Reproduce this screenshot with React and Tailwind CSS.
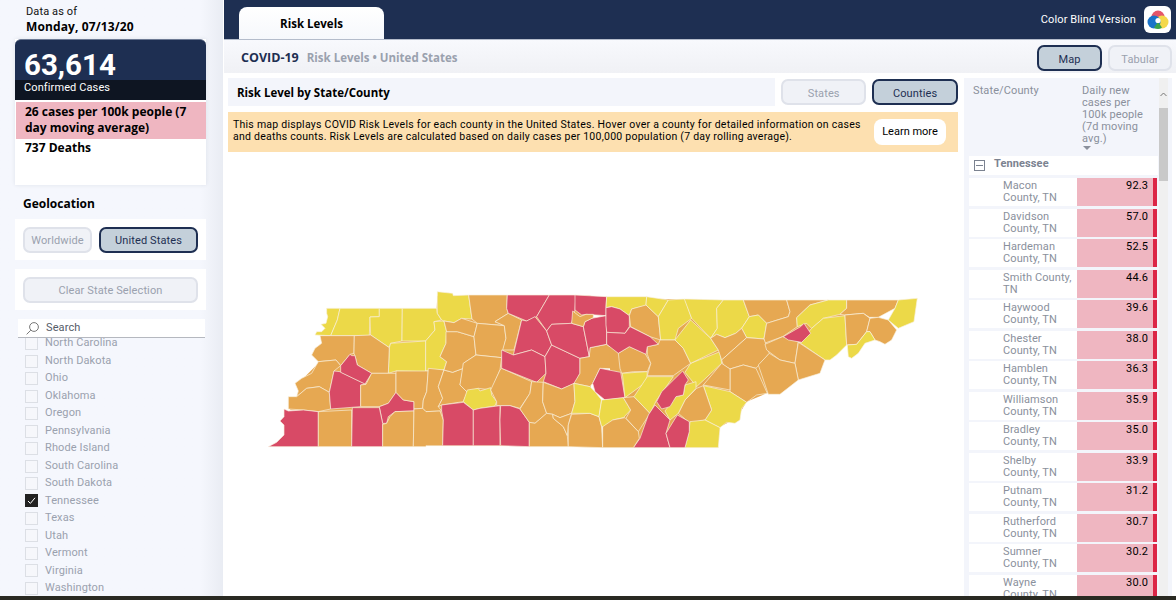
import React from "react";

const roboto = "font-['Roboto',sans-serif]";
const din = roboto + " tracking-[0.01em]";
const bold = "font-['Open_Sans',sans-serif] font-bold";

const R = "#d84a66";
const O = "#e6a852";
const Y = "#ecd948";

// counties, west half (coords are 3x, offset 260,285)
const west = [
    [Y, "200,70 240,70 232,105 212,152 165,150 170,140 185,140 195,130 183,118 198,115 203,95 200,85"],
    [Y, "240,70 358,70 358,95 330,96 328,152 212,152 232,105"],
    [Y, "358,70 427,70 426,168 392,175 388,188 332,150 330,96 358,95"],
    [Y, "427,70 530,70 532,85 545,105 522,110 525,135 497,168 426,168"],
    [Y, "392,175 497,168 497,260 408,258 385,265 388,188"],
    [Y, "522,110 552,108 560,140 558,175 540,215 560,230 552,255 497,258 497,168 525,135"],
    [Y, "532,20 578,25 580,32 626,30 636,102 605,100 582,113 552,108 545,105 532,85"],
    [O, "180,152 212,152 283,152 282,205 270,208 242,242 228,225 175,230 155,210 165,190 185,175"],
    [O, "283,152 332,150 388,188 385,265 335,265 292,240 285,212 282,205"],
    [O, "175,230 228,225 242,242 222,258 208,322 178,305 140,310 110,335 115,318 105,295 125,280 155,265"],
    [O, "110,335 140,310 178,305 208,322 212,372 175,380 130,375 85,372 85,335"],
    [R, "222,258 240,260 318,298 302,300 302,365 212,372 208,322"],
    [R, "275,212 285,212 292,240 335,265 315,297 242,262 242,242 270,208"],
    [O, "335,265 408,265 408,322 385,355 358,365 302,365 302,300 318,298"],
    [R, "408,322 430,345 462,350 462,378 405,380 385,395 380,415 368,415 358,365 385,355"],
    [O, "408,258 505,258 500,320 490,345 488,370 462,372 462,350 430,345 408,322"],
    [O, "505,250 552,255 535,305 548,340 535,365 545,378 498,380 488,370 490,345 500,320"],
    [O, "552,255 578,262 610,250 600,300 622,322 610,350 545,360 535,365 548,340 535,305"],
    [O, "558,140 592,140 642,155 648,210 610,235 610,250 578,262 552,255 560,230 540,215 558,175"],
    [O, "552,108 582,113 605,100 652,115 642,155 592,140 560,140"],
    [O, "626,30 742,30 740,70 745,85 705,110 735,122 652,115 636,102"],
    [O, "652,115 733,122 738,160 725,218 648,210 642,155"],
    [O, "648,210 725,218 720,255 695,315 655,310 622,322 600,300 610,235"],
    [Y, "622,315 655,310 660,318 692,308 695,330 710,350 705,363 660,370 640,375 610,350"],
    [O, "725,250 815,290 810,325 780,370 750,362 710,362 710,350 692,315 720,255"],
    [O, "705,110 745,85 785,105 762,195 728,195 738,160 733,122"],
    [R, "742,30 868,30 830,95 800,108 745,85 740,70"],
    [R, "868,30 948,30 945,75 935,115 875,118 860,138 830,95"],
    [R, "800,108 825,95 860,138 875,180 855,215 815,195 760,210 785,105"],
    [R, "725,195 760,210 815,195 855,215 858,265 830,292 725,250"],
    [R, "875,180 960,220 960,265 945,295 905,312 850,290 858,265 855,215"],
    [R, "860,138 875,118 935,115 970,125 988,215 960,220 875,180"],
    [R, "72,372 85,378 130,375 175,380 175,485 25,485 50,472 72,450 72,420 60,408 72,395"],
    [O, "175,380 275,375 275,485 175,485"],
    [R, "277,368 358,368 368,415 368,485 275,485"],
    [O, "368,418 380,415 390,395 405,380 462,378 460,485 368,485"],
    [O, "462,372 488,370 498,380 540,378 550,405 548,482 498,482 498,485 460,485"],
    [R, "545,360 610,352 640,375 640,482 548,482 550,405 545,378"],
    [R, "640,375 660,370 720,362 720,482 640,482"],
    [R, "722,362 750,362 780,372 808,412 808,485 722,482 720,405"],
    [O, "815,290 850,292 848,350 860,385 825,415 808,412 780,372 810,325"],
    [O, "850,292 905,312 942,295 945,350 935,385 900,398 878,388 860,385 848,350"],
    [O, "808,412 825,415 860,385 878,388 880,400 910,425 922,452 925,485 808,485"],
    [O, "878,388 900,398 935,385 925,420 922,452 910,425 880,400"],
    [O, "925,420 935,388 990,385 1017,395 1025,425 1028,488 925,485"],
    [O, "960,220 988,215 990,188 1040,178 1075,205 1080,252 1020,250 998,295 990,305 942,295 960,265"],
    [Y, "942,295 990,305 1005,320 1025,345 1017,395 990,385 935,385 945,350"],
];

// counties, east half (offset 590,285)
const east = [
    [R, "-45,30 50,35 48,68 48,92 -12,88 -25,90 -45,75"],
    [R, "-15,110 5,100 48,92 50,142 50,178 0,188 -2,215 -20,125"],
    [O, "-52,78 -30,95 -12,88 10,88 10,98 -15,110 -20,125 -55,115"],
    [Y, "50,35 170,35 168,62 125,72 118,92 90,72 65,65 48,68"],
    [R, "48,68 65,65 90,72 118,92 118,125 105,145 50,142 48,120"],
    [O, "125,72 168,60 205,95 212,165 180,155 122,125 118,92"],
    [Y, "170,35 235,45 205,95 168,60"],
    [Y, "235,45 285,42 305,100 265,130 255,165 212,165 205,95"],
    [Y, "283,42 400,45 380,70 382,130 362,160 305,100"],
    [Y, "400,45 460,45 478,95 455,130 437,145 405,158 380,148 362,160 382,130 380,70"],
    [O, "460,45 590,45 600,80 595,95 530,115 505,90 478,95"],
    [Y, "478,95 505,90 530,115 522,162 500,160 470,158 455,130"],
    [O, "590,45 715,45 660,60 620,98 622,125 578,155 523,175 522,162 530,115 595,95 600,80"],
    [Y, "715,45 770,45 770,70 750,88 700,100 665,130 650,115 622,125 620,98 660,60"],
    [Y, "650,148 665,130 700,100 765,92 770,180 740,210 720,225 705,225 625,170 635,172"],
    [O, "770,45 925,45 915,70 865,97 838,97 820,85 765,90 750,88 770,70"],
    [O, "765,90 820,85 840,100 830,140 800,178 770,180"],
    [O, "840,100 865,97 895,105 920,135 905,165 885,178 870,170 855,165 840,140 830,140"],
    [Y, "830,140 840,140 855,165 825,175 805,205 785,220 775,215 772,180 800,178"],
    [Y, "925,45 982,40 972,110 925,130 895,105 915,70"],
    [O, "172,272 182,235 172,208 172,185 205,178 210,165 255,165 280,190 302,235 250,272"],
    [O, "85,205 118,185 165,205 182,235 172,260 130,260 95,265 90,250"],
    [R, "30,250 92,262 105,338 45,345 15,320 8,295"],
    [Y, "97,265 172,260 170,290 105,338"],
    [R, "50,142 105,145 120,125 180,155 205,178 172,185 168,208 118,185 85,205 50,178"],
    [Y, "35,345 100,338 122,375 100,398 68,405 55,425 35,425 27,395"],
    [O, "100,338 132,335 180,385 145,440 108,400 122,375"],
    [Y, "172,275 250,275 200,345 180,385 132,335"],
    [Y, "302,235 390,200 395,235 320,305 285,262"],
    [Y, "255,165 302,105 362,160 385,195 302,235 280,190"],
    [O, "362,160 380,148 405,158 437,145 455,130 470,158 395,225 385,195"],
    [O, "470,158 522,162 538,205 498,250 460,240 420,252 400,240 395,225"],
    [O, "525,178 578,155 625,170 615,235 570,225 530,195"],
    [O, "625,172 705,225 690,265 625,285 615,235"],
    [O, "538,205 570,225 615,235 625,285 570,328 535,328 505,240"],
    [O, "420,252 460,240 498,250 532,325 500,330 470,352 420,320"],
    [O, "395,235 420,252 420,315 340,300"],
    [Y, "340,302 420,320 470,352 455,370 450,405 435,415 410,412 390,428 345,405 365,375"],
    [O, "320,310 340,302 365,375 345,405 300,415 265,385 285,345"],
    [Y, "300,410 345,405 390,428 385,488 285,488 297,440"],
    [Y, "318,290 318,310 285,345 265,385 240,405 225,378 258,335 280,330 285,300"],
    [R, "278,258 295,285 285,300 280,330 258,335 240,365 215,372 200,350 215,320"],
    [R, "195,360 240,405 228,445 240,488 130,488 150,460 175,390"],
    [R, "262,390 298,410 298,440 285,488 240,488 228,445"],
    [O, "38,425 68,405 105,398 145,440 148,460 130,488 38,488"],
    [R, "580,155 632,125 642,115 662,145 635,172 595,165"],
];

const states = [
    "North Carolina", "North Dakota", "Ohio", "Oklahoma", "Oregon", "Pennsylvania", "Rhode Island",
    "South Carolina", "South Dakota", "Tennessee", "Texas", "Utah", "Vermont", "Virginia", "Washington",
];

const rows = [
    ["Macon County, TN", "92.3"], ["Davidson County, TN", "57.0"], ["Hardeman County, TN", "52.5"],
    ["Smith County, TN", "44.6"], ["Haywood County, TN", "39.6"], ["Chester County, TN", "38.0"],
    ["Hamblen County, TN", "36.3"], ["Williamson County, TN", "35.9"], ["Bradley County, TN", "35.0"],
    ["Shelby County, TN", "33.9"], ["Putnam County, TN", "31.2"], ["Rutherford County, TN", "30.7"],
    ["Sumner County, TN", "30.2"], ["Wayne County, TN", "30.0"],
];

function ToggleButton({ active, low, className, children }) {
    return (
        <div
            className={
                (active
                    ? "bg-[#c4d0da] border-[#1e2f52] text-[#1e2f52]"
                    : "bg-[#f0f2f7] border-[#dfe2ea] text-[#9aa1ae]") +
                (low ? " pt-[5px]" : " pt-[3px]") +
                " flex items-center justify-center rounded-[7px] border-2 text-[11px] " + din + " " + className
            }
        >
            {children}
        </div>
    );
}

function SideBar() {
    return (
        <div className="w-[223px] shrink-0 bg-[#f3f5fb] bg-gradient-to-r from-[#f5f7fd] from-90% to-[#e9ecf3] flex flex-col">
            <div className={"pl-[26px] pt-[4px] text-[11px] leading-[15px] text-[#111] h-[39px] " + din}>
                Data as of
                <div className={"text-[12px] leading-[15px] text-black " + bold}>Monday, 07/13/20</div>
            </div>
            <div className="ml-[15px] mr-[17px] h-[146px] bg-white shadow-[0_0_4px_rgba(30,47,82,0.1)]">
                <div className="h-[61px] rounded-t-[6px] bg-[#1e2f52] border-t border-[#6d7a94] flex flex-col">
                    <div className={"h-[40px] pl-[9px] text-white text-[29.5px] leading-[50px] font-bold " + roboto}>63,614</div>
                    <div className={"h-[20px] pl-[9px] bg-[#0e1522] text-white text-[11px] leading-[15px] " + din}>Confirmed Cases</div>
                </div>
                <div className={"mt-[2px] ml-px h-[37px] pl-[9px] pr-[14px] pt-[2px] bg-[#efb6c1] text-[12px] leading-[16px] text-black " + bold}>
                    26 cases per 100k people (7 day moving average)
                </div>
                <div className={"pl-[10px] pt-[1px] text-[12px] leading-[16px] text-black " + bold}>737 Deaths</div>
            </div>
            <div className={"pl-[23px] mt-[11px] text-[12px] leading-[16px] text-black " + bold}>Geolocation</div>
            <div className="ml-[15px] mr-[17px] mt-[7px] h-[41px] bg-white flex items-center gap-[7px] px-[8px]">
                <ToggleButton className="w-[69px] h-[26px]">Worldwide</ToggleButton>
                <ToggleButton active className="w-[99px] h-[26px]">United States</ToggleButton>
            </div>
            <div className="ml-[15px] mr-[17px] mt-[9px] h-[41px] bg-white flex items-center px-[8px]">
                <ToggleButton className="w-[175px] h-[26px]">Clear State Selection</ToggleButton>
            </div>
            <div className={"ml-[18px] mr-[18px] mt-[9px] h-[19px] bg-white border-b border-[#b5b8bf] flex items-center pl-[8px] gap-[7px] text-[11px] text-[#555c68] " + din}>
                <svg width="13" height="13" viewBox="0 0 13 13" fill="none" stroke="#555" strokeWidth="0.8">
                    <circle cx="8" cy="5" r="4.4" />
                    <path d="M4.8 8.2 0.6 12.4" />
                </svg>
                Search
            </div>
            <div className="flex-1 overflow-hidden pl-[25px]">
                <div className="-mt-[3px]">
                    {states.map((s) => (
                        <div key={s} className={"h-[17.47px] flex items-center gap-[7px] text-[11px] text-[#9aa1ae] " + din}>
                            {s === "Tennessee" ? (
                                <span className="w-[13px] h-[13px] bg-[#222] flex items-center justify-center">
                                    <svg width="9" height="9" viewBox="0 0 9 9" fill="none" stroke="#fff" strokeWidth="1">
                                        <path d="M1 5 3.4 7.4 8 1.8" />
                                    </svg>
                                </span>
                            ) : (
                                <span className="w-[13px] h-[13px] border border-[#dcdfe5] bg-[#f6f7fb]" />
                            )}
                            {s}
                        </div>
                    ))}
                </div>
            </div>
        </div>
    );
}

function TopBar() {
    return (
        <div className="h-[40px] shrink-0 bg-[#1e2f52] border-b border-[#b4bccb] flex items-end pl-[15px] pr-[5px]">
            <div className={"w-[145px] h-[32px] rounded-t-[8px] bg-gradient-to-b from-white to-[#f6f8fc] flex items-center justify-center text-[11.5px] text-black pt-[1px] " + bold}>
                Risk Levels
            </div>
            <div className={"ml-auto self-center flex items-center gap-[8px] text-[11px] text-white " + din}>
                <span className="pt-[1px]">Color Blind Version</span>
                <span className="w-[27px] h-[27px] rounded-[6px] bg-white flex items-center justify-center">
                    <svg width="22" height="22" viewBox="0 0 22 22">
                        <circle cx="11" cy="8" r="6.5" fill="#e5566a" />
                        <circle cx="15" cy="13" r="6.5" fill="#f4d84a" />
                        <circle cx="7" cy="13" r="6.5" fill="#1a73c9" />
                        <path d="M7 18.5A6 6 0 0 0 15 18.5L11 13Z" fill="#3ba24a" />
                        <circle cx="11" cy="11.5" r="2.6" fill="#fff" />
                    </svg>
                </span>
            </div>
        </div>
    );
}

function CountyMap() {
    return (
        <svg className="block" width="730" height="444" viewBox="228 152 730 444">
            <g transform="translate(260 285) scale(0.3333)" strokeLinejoin="round">
                <polygon fill={O} points="240,72 530,72 532,32 626,32 992,32 992,483 175,483 175,378 90,375 110,335 125,285 175,235 185,175 215,152" />
                {west.map(([c, p], i) => <polygon key={i} fill={c} stroke="#f9f1df" strokeWidth="2" points={p} />)}
            </g>
            <g transform="translate(590 285) scale(0.3333)" strokeLinejoin="round">
                <polygon fill={O} points="60,38 460,47 760,47 770,90 770,170 700,220 620,285 530,325 470,350 440,400 390,425 383,486 60,486" />
                {east.map(([c, p], i) => <polygon key={i} fill={c} stroke="#f9f1df" strokeWidth="2" points={p} />)}
            </g>
        </svg>
    );
}

function CountyTable() {
    return (
        <div className="w-[208px] ml-[6px] bg-[#f3f5fb] flex h-full overflow-hidden pl-[5px]">
            <div className="w-[189px] shrink-0">
                <div className={"h-[78px] flex text-[11px] leading-[12px] text-[#8a909c] " + din}>
                    <div className="w-[108px] pl-[4px] pt-[7px]">State/County</div>
                    <div className="flex-1 pl-[5px] pr-[12px] pt-[7px]">
                        Daily new cases per 100k people (7d moving avg.)
                        <svg className="ml-[1px] mt-[1px]" width="8" height="4" viewBox="0 0 8 4"><path d="M0 0H8L4 4Z" fill="#8a909c" /></svg>
                    </div>
                </div>
                <div className={"h-[19px] bg-white flex items-center pl-[5px] gap-[9px] text-[11px] text-[#7b8290] font-bold " + din}>
                    <span className="w-[11px] h-[11px] border border-[#7b8290] flex items-center justify-center">
                        <span className="w-[7px] h-px bg-[#7b8290]" />
                    </span>
                    <span className="-mt-[2px]">Tennessee</span>
                </div>
                <div className="h-[3px]" />
                {rows.map(([name, v]) => (
                    <div key={name} className="h-[30.5px] flex pb-[2.5px]">
                        <div className={"w-[108px] bg-white pl-[34px] pr-[2px] text-[11px] leading-[12px] pt-[2px] text-[#8a909c] " + din}>{name}</div>
                        <div className={"w-[76px] bg-[#efb6c1] text-right pr-[5px] pt-[2px] text-[11px] leading-[12px] text-black " + din}>{v}</div>
                        <div className="w-[4px] bg-[#dc2647]" />
                    </div>
                ))}
            </div>
            <div className="w-[9px] ml-[1px] shrink-0 bg-[#f0f0f0] flex flex-col">
                <div className="h-[30px] flex items-center justify-center pt-[2px]">
                    <svg width="7" height="5" viewBox="0 0 7 5" fill="none" stroke="#777" strokeWidth="1"><path d="M0.5 4 3.5 1 6.5 4" /></svg>
                </div>
                <div className="h-[73px] bg-[#c9c9c9]" />
            </div>
        </div>
    );
}

export default function App() {
    return (
        <div className="w-[1176px] h-[600px] overflow-hidden bg-white flex flex-col">
            <div className="h-[596px] flex overflow-hidden">
                <SideBar />
                <div className="flex-1 ml-px flex flex-col min-w-0">
                    <TopBar />
                    <div className="h-[33px] shrink-0 bg-gradient-to-b from-[#f8f9fd] to-[#f0f1f5] flex items-center pt-[3px] pl-[17px] pr-[4px]">
                        <span className={"text-[12.5px] text-[#1e2f52] " + bold}>COVID-19</span>
                        <span className={"ml-[8px] text-[11.5px] text-[#9aa1ae] " + bold}>Risk Levels • United States</span>
                        <ToggleButton active low className="ml-auto w-[65px] h-[26px]">Map</ToggleButton>
                        <ToggleButton low className="ml-[6px] w-[64px] h-[26px]">Tabular</ToggleButton>
                    </div>
                    <div className="flex-1 flex pt-[5px] pl-[4px] min-h-0">
                        <div className="w-[730px] shrink-0 flex flex-col">
                            <div className="h-[28px] flex gap-[6px]">
                                <div className={"w-[548px] bg-[#f3f5fb] flex items-center pl-[9px] pt-[1px] text-[11.5px] text-black " + bold}>Risk Level by State/County</div>
                                <ToggleButton low className="w-[85px] h-[26px] mt-[1px]">States</ToggleButton>
                                <ToggleButton active low className="w-[86px] h-[26px] mt-[1px]">Counties</ToggleButton>
                            </div>
                            <div className={"mt-[6px] h-[40px] bg-[#fde0b0] flex items-center pl-[5px] pr-[12px] text-[10.5px] leading-[12px] text-black " + roboto}>
                                <span className="w-[635px] shrink-0 tracking-[0.024em] -mt-[3px]">
                                    This map displays COVID Risk Levels for each county in the United States. Hover over a county for detailed information on cases and deaths counts. Risk Levels are calculated based on daily cases per 100,000 population (7 day rolling average).
                                </span>
                                <span className="ml-auto w-[72px] h-[26px] rounded-[8px] bg-white flex items-center justify-center text-[11px]">Learn more</span>
                            </div>
                            <CountyMap />
                        </div>
                        <CountyTable />
                    </div>
                </div>
            </div>
            <div className="h-[4px] bg-[#2a2a22]" />
        </div>
    );
}
